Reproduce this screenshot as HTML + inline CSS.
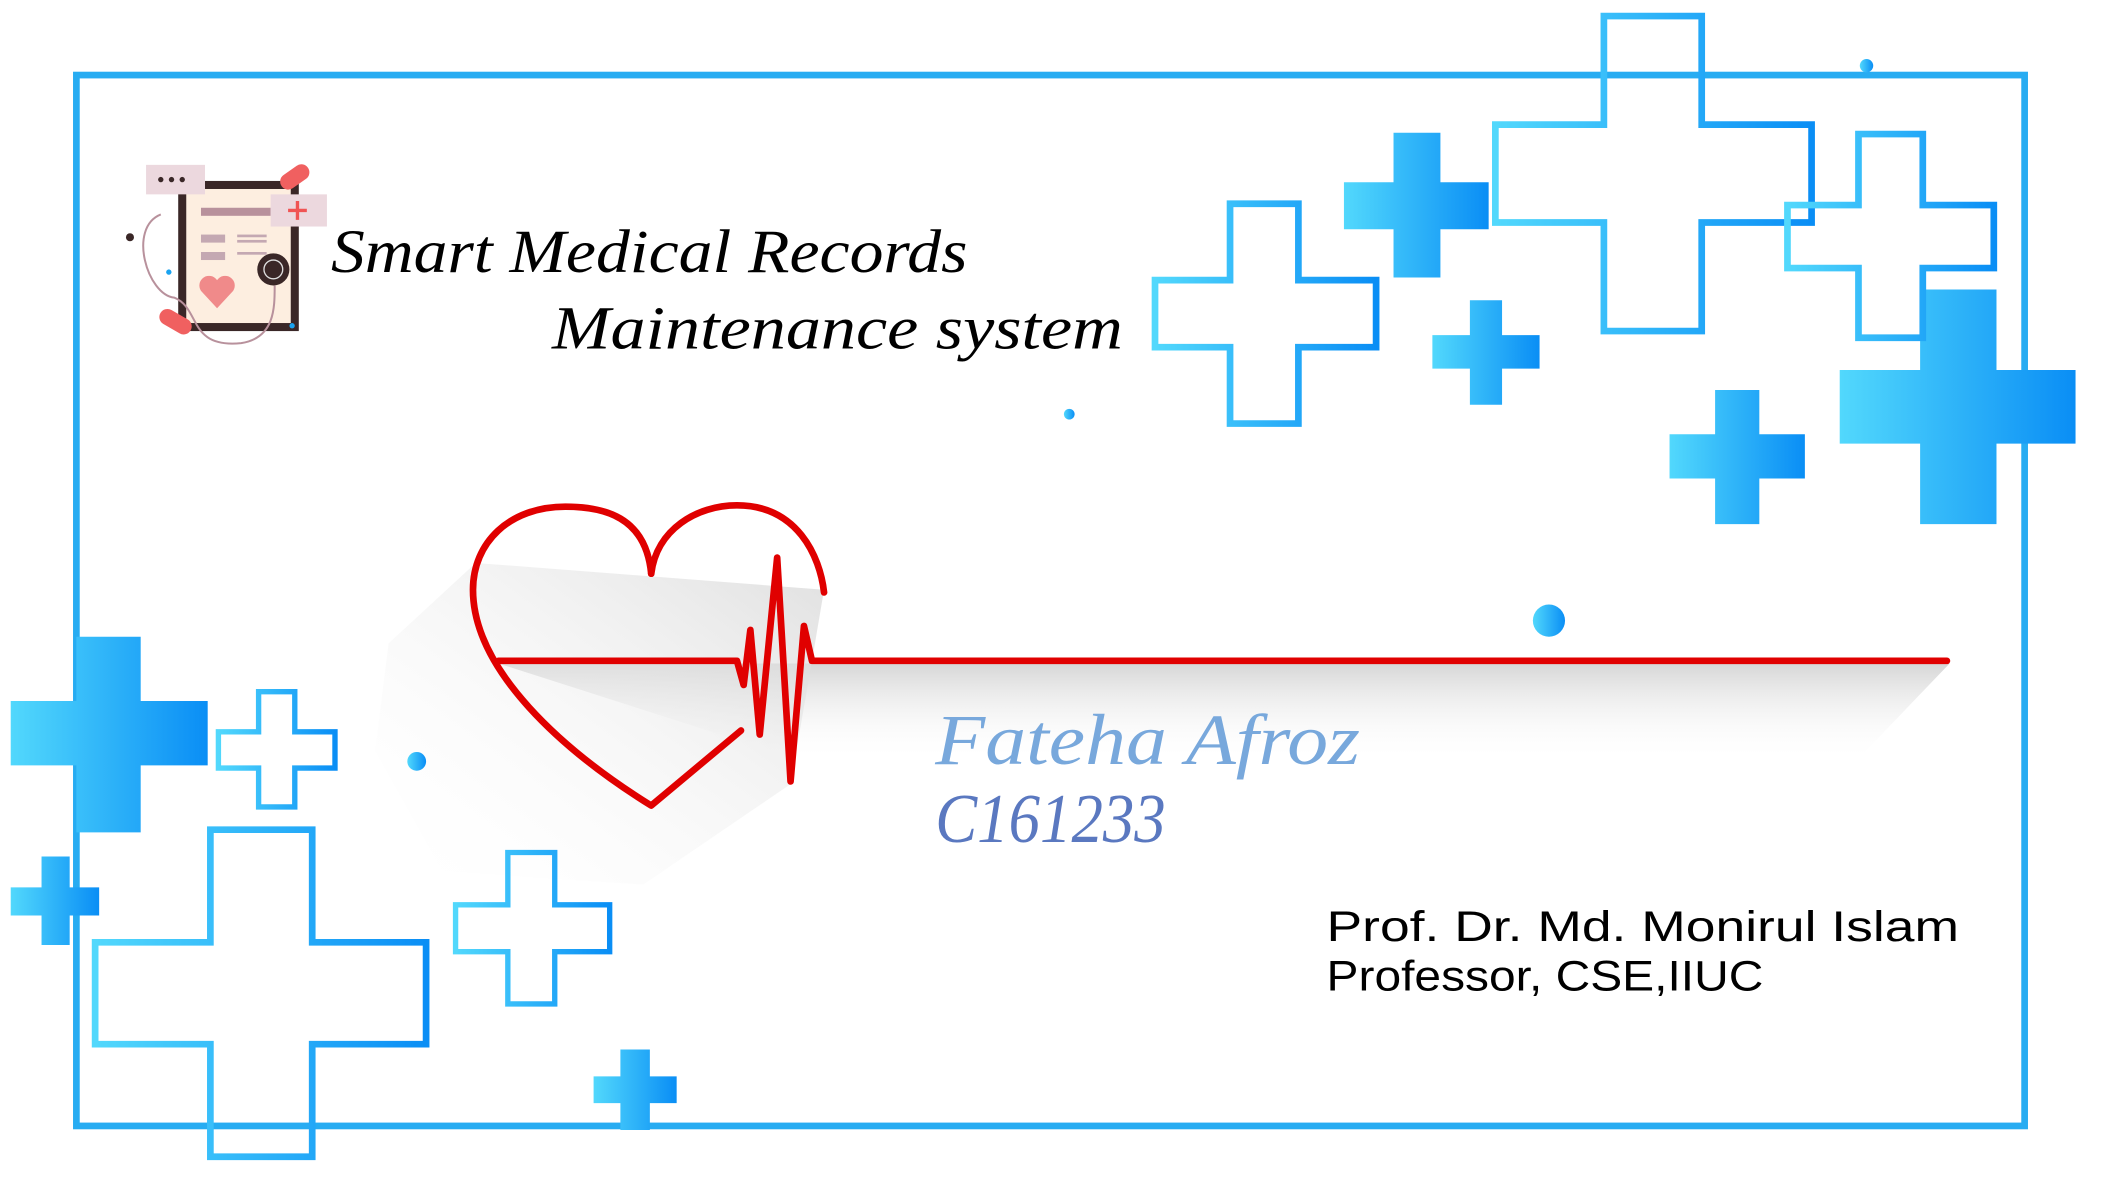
<!DOCTYPE html>
<html><head><meta charset="utf-8"><style>
html,body{margin:0;padding:0;background:#fff;overflow:hidden}
svg{display:block}
</style></head><body>
<svg width="2101" height="1201" viewBox="0 0 1568 896" preserveAspectRatio="none" xmlns="http://www.w3.org/2000/svg">
<defs>
<linearGradient id="g" x1="0" y1="0" x2="1" y2="0"><stop offset="0" stop-color="#52d8fc"/><stop offset="1" stop-color="#0a8ef5"/></linearGradient>
<linearGradient id="sh" x1="0" y1="0" x2="0" y2="1"><stop offset="0" stop-color="#d6d6d6"/><stop offset="1" stop-color="#fff" stop-opacity="0"/></linearGradient>
<linearGradient id="sh2" x1="1" y1="0" x2="0" y2="1"><stop offset="0" stop-color="#d8d8d8"/><stop offset="1" stop-color="#fff" stop-opacity="0"/></linearGradient>
</defs>
<rect x="57" y="56" width="1454" height="784" fill="none" stroke="#27acf2" stroke-width="5"/>

<polygon points="372,495 1455,495 1385,568 600,568" fill="url(#sh)"/>
<polygon points="355,420 486,430 615,440 606,493 590,585 480,660 330,650 280,560 290,480" fill="url(#sh2)" opacity="0.8"/>

<g fill="url(#g)">
<path d="M1040 99h35v37h36v35h-36v36h-35v-36h-37v-35h37z"/>
<path d="M1097 224h24v26h28v25h-28v27h-24v-27h-28v-25h28z"/>
<path d="M1280 291h33v33h34v33h-34v34h-33v-34h-34v-33h34z"/>
<path d="M1433 216h57v60h59v55h-59v60h-57v-60h-60v-55h60z"/>
<path d="M57 475h48v48h50v48h-50v50h-48v-50h-49v-48h49z"/>
<path d="M31 639h21v23h22v21h-22v22h-21v-22h-23v-21h23z"/>
<path d="M463 783h22v20h20v20h-20v20h-22v-20h-20v-20h20z"/>
<circle cx="1393" cy="49" r="5"/><circle cx="798" cy="309" r="4"/><circle cx="1156" cy="463" r="12"/><circle cx="311" cy="568" r="7"/>
</g>
<g fill="none" stroke="url(#g)" stroke-width="5">
<path d="M1197 12h73v81h82v73h-82v81h-73v-81h-81v-73h81z"/>
<path d="M918 152h51v57h58v50h-58v57h-51v-57h-56v-50h56z"/>
<path d="M1387 100h48v53h53v47h-53v52h-48v-52h-53v-47h53z"/>
<path d="M193 516h27v30h30v27h-30v29h-27v-29h-30v-27h30z" stroke-width="4"/>
<path d="M157 619h76v84h85v76h-85v84h-76v-84h-86v-76h86z"/>
<path d="M379 636h35v39h41v35h-41v39h-35v-39h-39v-35h39z" stroke-width="4"/>
</g>

<g fill="none" stroke="#e00000" stroke-width="5" stroke-linecap="round" stroke-linejoin="round">
<path d="M486 428 C482 385 450 378 422 378 C380 378 353 405 353 440 C353 500 420 560 486 601 L553 545"/>
<path d="M486 428 C490 395 520 377 550 377 C595 377 612 415 615 442"/>
<path d="M372 493 L550 493 L555 511 L560 470 L567 548 L580 416 L590 583 L600 467 L606 493 L1453 493"/>
</g>

<g>
<rect x="133" y="135" width="90" height="112" fill="#3a2727"/>
<rect x="139" y="141" width="78" height="100" fill="#fdeee0"/>
<rect x="150" y="155" width="52" height="6" fill="#b8919c"/>
<rect x="150" y="175" width="18" height="6" fill="#c4a8b2"/><rect x="177" y="175" width="22" height="2" fill="#c4a8b2"/><rect x="177" y="179" width="22" height="2" fill="#c4a8b2"/>
<rect x="150" y="188" width="18" height="6" fill="#c4a8b2"/><rect x="177" y="188" width="22" height="2" fill="#c4a8b2"/>
<path d="M162 230 l-12 -13 a6 6 0 0 1 12 -8 a6 6 0 0 1 12 8z" fill="#f08a8a"/>
<circle cx="204" cy="201" r="12" fill="#3a2727"/><circle cx="204" cy="201" r="7" fill="none" stroke="#ddd" stroke-width="1"/>
<rect x="109" y="123" width="44" height="22" fill="#ecd8de"/>
<circle cx="120" cy="134" r="2" fill="#3a2727"/><circle cx="128" cy="134" r="2" fill="#3a2727"/><circle cx="136" cy="134" r="2" fill="#3a2727"/>
<rect x="202" y="145" width="42" height="24" fill="#ecd8de"/>
<path d="M222 150v14M215 157h14" stroke="#f05454" stroke-width="2.5"/>
<rect x="208" y="126" width="24" height="12" rx="6" fill="#f06060" transform="rotate(-35 220 132)"/>
<rect x="118" y="234" width="26" height="12" rx="6" fill="#f06060" transform="rotate(30 131 240)"/>
<path d="M120 160 C95 170 110 220 130 222 C150 230 140 260 180 256 C205 252 205 230 205 213" fill="none" stroke="#b8919c" stroke-width="1.5"/>
<circle cx="97" cy="177" r="3" fill="#3a2727"/>
<circle cx="126" cy="203" r="2" fill="#1aa3f0"/><circle cx="218" cy="243" r="2" fill="#1aa3f0"/>
</g>

<g font-family="'Liberation Serif', serif" font-style="italic">
<text x="247" y="203" font-size="46" fill="#000" textLength="475" lengthAdjust="spacingAndGlyphs">Smart Medical Records</text>
<text x="412" y="260" font-size="46" fill="#000" textLength="426" lengthAdjust="spacingAndGlyphs">Maintenance system</text>
<text x="698" y="570" font-size="54" fill="#78a8dc" textLength="317" lengthAdjust="spacingAndGlyphs">Fateha Afroz</text>
<text x="698" y="628" font-size="52" fill="#5a78c0" textLength="172" lengthAdjust="spacingAndGlyphs">C161233</text>
</g>
<g font-family="'Liberation Sans', sans-serif" fill="#000">
<text x="990" y="702" font-size="32" textLength="472" lengthAdjust="spacingAndGlyphs">Prof. Dr. Md. Monirul Islam</text>
<text x="990" y="739" font-size="32" textLength="326" lengthAdjust="spacingAndGlyphs">Professor, CSE,IIUC</text>
</g>
</svg>
</body></html>
